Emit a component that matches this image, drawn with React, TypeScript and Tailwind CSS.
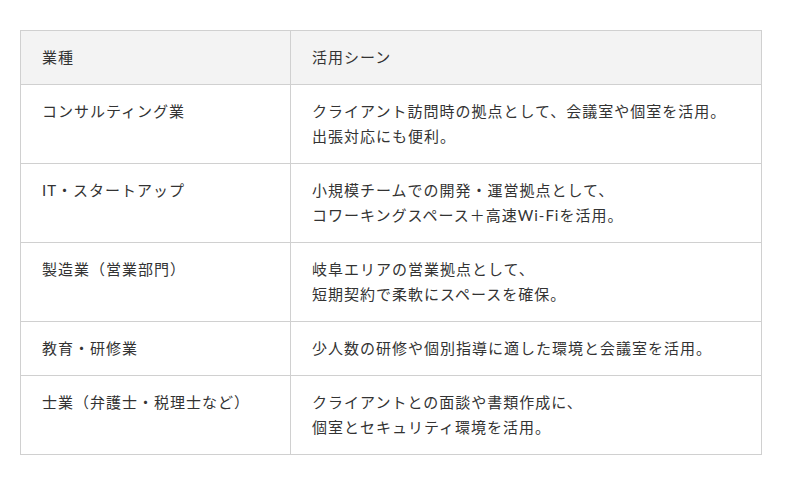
import React from "react";

const rows: [string, string[]][] = [
  ["コンサルティング業", ["クライアント訪問時の拠点として、会議室や個室を活用。", "出張対応にも便利。"]],
  ["IT・スタートアップ", ["小規模チームでの開発・運営拠点として、", "コワーキングスペース＋高速Wi-Fiを活用。"]],
  ["製造業（営業部門）", ["岐阜エリアの営業拠点として、", "短期契約で柔軟にスペースを確保。"]],
  ["教育・研修業", ["少人数の研修や個別指導に適した環境と会議室を活用。"]],
  ["士業（弁護士・税理士など）", ["クライアントとの面談や書類作成に、", "個室とセキュリティ環境を活用。"]],
];

export default function App() {
  return (
    <div
      className="w-[800px] h-[485px] bg-white pt-[30px] pl-[20px]"
      style={{ fontFamily: 'Lato, "Noto Sans CJK JP", sans-serif' }}
    >
      <table className="w-[742px] border-collapse text-[15px] leading-[25px] tracking-[1px] text-[#333] [text-spacing-trim:space-all]">
        <thead>
          <tr className="bg-[#f3f3f3]">
            <th className="w-[270px] border border-[#d0d0d0] px-[21px] py-[14px] text-left font-normal">業種</th>
            <th className="border border-[#d0d0d0] px-[21px] py-[14px] text-left font-normal">活用シーン</th>
          </tr>
        </thead>
        <tbody>
          {rows.map(([a, b]) => (
            <tr key={a}>
              <td className="border border-[#d0d0d0] px-[21px] py-[14px] align-top">{a}</td>
              <td className="border border-[#d0d0d0] px-[21px] py-[14px] align-top">
                {b.map((l) => (
                  <div key={l}>{l}</div>
                ))}
              </td>
            </tr>
          ))}
        </tbody>
      </table>
    </div>
  );
}
